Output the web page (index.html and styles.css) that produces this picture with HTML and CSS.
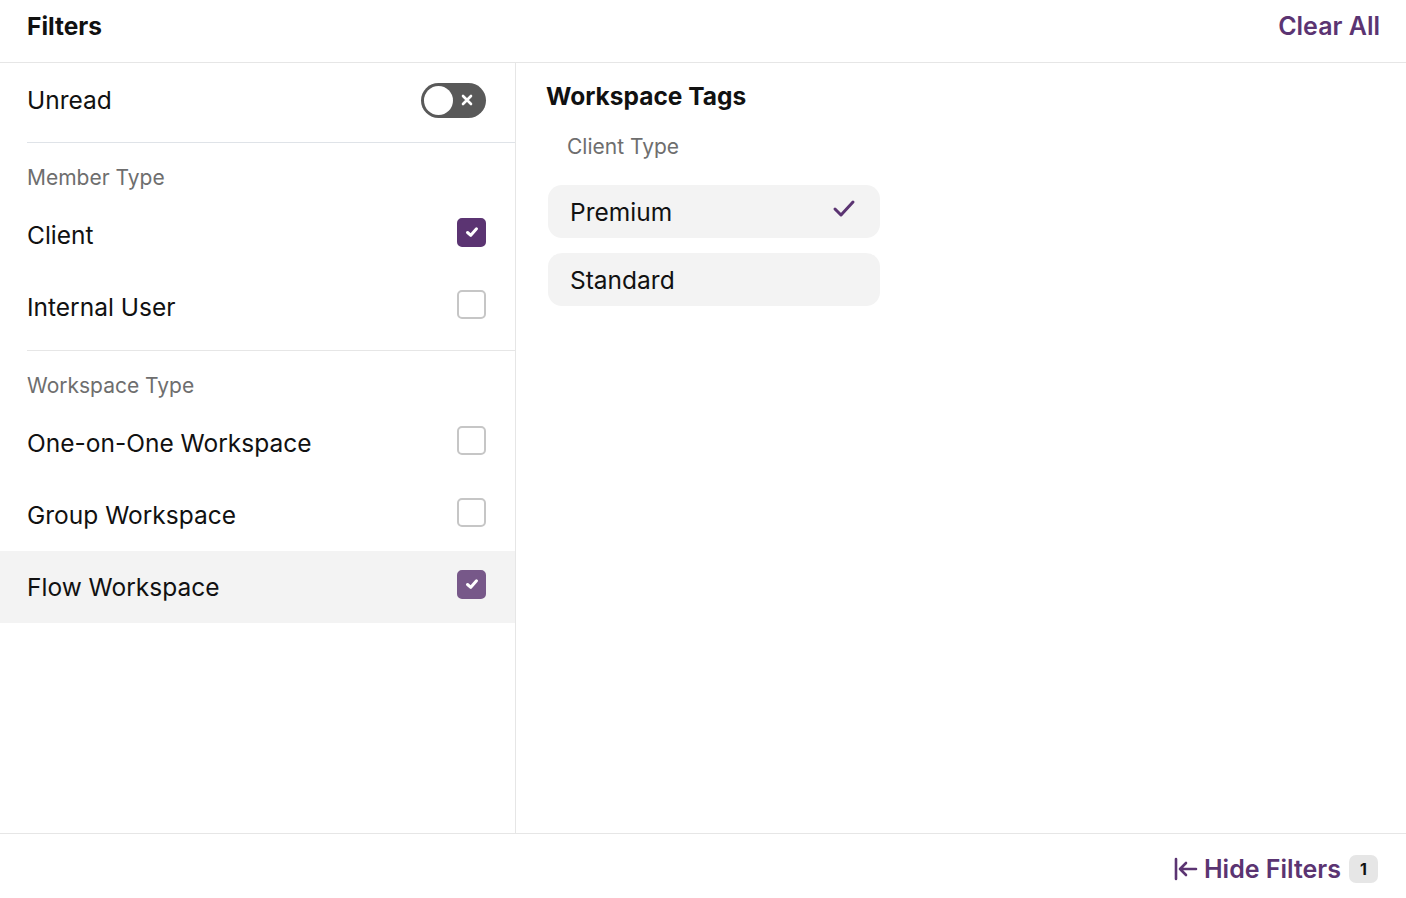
FILE: index.html
```html
<!DOCTYPE html>
<html lang="en">
<head>
    <meta charset="UTF-8">
    <meta name="viewport" content="width=device-width, initial-scale=1.0">
    <title>Filters</title>
    <link rel="stylesheet" href="styles.css">
</head>
<body>
    <div class="filters-page">
        <!-- Cabeçalho -->
        <div class="filters-header">
            <span class="filters-title">Filters</span>
            <button class="clear-button">Clear All</button>
        </div>

        <div class="filters-body">
            <!-- Coluna esquerda -->
            <div class="left-column">
                <div class="unread-row">
                    <span class="row-label">Unread</span>
                    <span class="toggle">
                        <span class="toggle-knob"></span>
                        <svg class="toggle-x" width="12" height="12" viewBox="0 0 12 12">
                            <path d="M2 2 L10 10 M10 2 L2 10" stroke="#fff" stroke-width="2.6" stroke-linecap="round"/>
                        </svg>
                    </span>
                </div>

                <div class="filter-group">
                    <div class="group-label">Member Type</div>
                    <div class="check-row">
                        <span class="row-label">Client</span>
                        <span class="checkbox checked">
                            <svg width="16" height="16" viewBox="0 0 16 16"><path d="M3.5 8.5 L6.8 11.3 L12.5 4.8" fill="none" stroke="#fff" stroke-width="3" stroke-linecap="round" stroke-linejoin="round"/></svg>
                        </span>
                    </div>
                    <div class="check-row">
                        <span class="row-label">Internal User</span>
                        <span class="checkbox"></span>
                    </div>
                </div>

                <div class="filter-group last">
                    <div class="group-label">Workspace Type</div>
                    <div class="check-row">
                        <span class="row-label">One-on-One Workspace</span>
                        <span class="checkbox"></span>
                    </div>
                    <div class="check-row">
                        <span class="row-label">Group Workspace</span>
                        <span class="checkbox"></span>
                    </div>
                    <div class="check-row hover">
                        <span class="row-label">Flow Workspace</span>
                        <span class="checkbox checked">
                            <svg width="16" height="16" viewBox="0 0 16 16"><path d="M3.5 8.5 L6.8 11.3 L12.5 4.8" fill="none" stroke="#fff" stroke-width="3" stroke-linecap="round" stroke-linejoin="round"/></svg>
                        </span>
                    </div>
                </div>
            </div>

            <!-- Coluna direita -->
            <div class="right-column">
                <div class="tags-title">Workspace Tags</div>
                <div class="tags-subtitle">Client Type</div>
                <div class="tag-list">
                    <div class="tag-pill">
                        <span>Premium</span>
                        <svg width="24" height="20" viewBox="0 0 24 20"><path d="M3 10 L9 16 L21 3" fill="none" stroke="#5b3472" stroke-width="3" stroke-linecap="round" stroke-linejoin="round"/></svg>
                    </div>
                    <div class="tag-pill">
                        <span>Standard</span>
                    </div>
                </div>
            </div>
        </div>

        <!-- Rodapé -->
        <div class="filters-footer">
            <button class="hide-button">
                <svg width="24" height="24" viewBox="0 0 24 24"><path d="M2 2 V22 M22 12 H6 M12 6 L6 12 L12 18" fill="none" stroke="#5b3472" stroke-width="2.6" stroke-linecap="round" stroke-linejoin="round"/></svg>
                <span>Hide Filters</span>
            </button>
            <span class="count-badge">1</span>
        </div>
    </div>
</body>
</html>
```

FILE: styles.css
```css
body {
    font-family: Inter, "Open Sans", sans-serif;
    background-color: #fff;
    color: #111;
    margin: 0;
}

.filters-page {
    height: 898px;
    display: flex;
    flex-direction: column;
}

.filters-header {
    height: 63px;
    flex-shrink: 0;
    border-bottom: 1px solid #e6e6e6;
    display: flex;
    justify-content: space-between;
    align-items: center;
    padding: 0 26px 10px 27px;
    box-sizing: border-box;
}

.filters-title {
    font-size: 24.5px;
    font-weight: 700;
}

.clear-button,
.hide-button {
    background: none;
    border: none;
    padding: 0;
    font-family: inherit;
    color: #5b3472; /* Roxo */
    font-weight: 600;
    cursor: pointer;
}

.clear-button {
    font-size: 25px;
}

.filters-body {
    flex-grow: 1;
    display: flex;
    border-bottom: 1px solid #e6e6e6;
}

.left-column {
    width: 515px;
    border-right: 1px solid #e6e6e6;
}

.unread-row {
    height: 79px;
    margin-left: 27px;
    padding-right: 29px;
    display: flex;
    justify-content: space-between;
    align-items: center;
    border-bottom: 1px solid #dfe3e8;
}

.unread-row .row-label {
    margin-top: -6px;
}

.row-label {
    font-size: 24.5px;
}

.toggle {
    width: 65px;
    height: 35px;
    background-color: #595959;
    border-radius: 18px;
    display: flex;
    align-items: center;
    justify-content: space-between;
    padding: 0 13px 0 3px;
    box-sizing: border-box;
    margin-top: -5px;
}

.toggle-knob {
    width: 29px;
    height: 29px;
    border-radius: 50%;
    background-color: #fff;
}

.filter-group {
    margin-left: 27px;
    padding-bottom: 7px;
    border-bottom: 1px solid #e6e6e6;
}

.filter-group.last {
    margin-left: 0;
    border-bottom: none;
}

.filter-group.last .group-label {
    padding-left: 27px;
}

.filter-group.last .check-row {
    padding-left: 27px;
}

.group-label {
    height: 56px;
    display: flex;
    align-items: center;
    padding-top: 12px;
    box-sizing: border-box;
    font-size: 21px;
    color: #6e6e6e;
}

.check-row {
    height: 72px;
    display: flex;
    justify-content: space-between;
    align-items: center;
    padding-right: 29px;
}

.check-row.hover {
    background-color: #f3f3f3;
}

.checkbox {
    width: 29px;
    height: 29px;
    box-sizing: border-box;
    border: 2px solid #c6c6c6;
    border-radius: 5px;
    display: flex;
    align-items: center;
    justify-content: center;
    margin-top: -6px;
}

.checkbox.checked {
    background-color: #5b3472;
    border-color: #5b3472;
}

.check-row.hover .checkbox.checked {
    background-color: #775889;
    border-color: #775889;
}

.right-column {
    flex-grow: 1;
    padding: 19px 30px;
}

.tags-title {
    font-size: 24.5px;
    font-weight: 700;
    line-height: 28px;
}

.tags-subtitle {
    font-size: 21px;
    color: #6e6e6e;
    margin: 24px 0 0 21px;
    line-height: 26px;
}

.tag-list {
    margin: 25px 0 0 2px;
    display: flex;
    flex-direction: column;
    gap: 15px;
    width: 332px;
}

.tag-pill {
    height: 53px;
    background-color: #f3f3f3;
    border-radius: 14px;
    padding: 0 24px 0 22px;
    display: flex;
    justify-content: space-between;
    align-items: center;
    font-size: 24.5px;
}

.tag-pill svg {
    margin-top: -6px;
}

.filters-footer {
    height: 64px;
    flex-shrink: 0;
    box-sizing: border-box;
    display: flex;
    justify-content: flex-end;
    align-items: center;
    gap: 8px;
    padding: 6px 28px 0 0;
}

.hide-button {
    display: flex;
    align-items: center;
    gap: 6px;
    font-size: 25px;
}

.count-badge {
    width: 29px;
    height: 28px;
    border-radius: 7px;
    background-color: #e6e6e6;
    display: flex;
    align-items: center;
    justify-content: center;
    font-size: 16px;
    font-weight: 700;
}
```
